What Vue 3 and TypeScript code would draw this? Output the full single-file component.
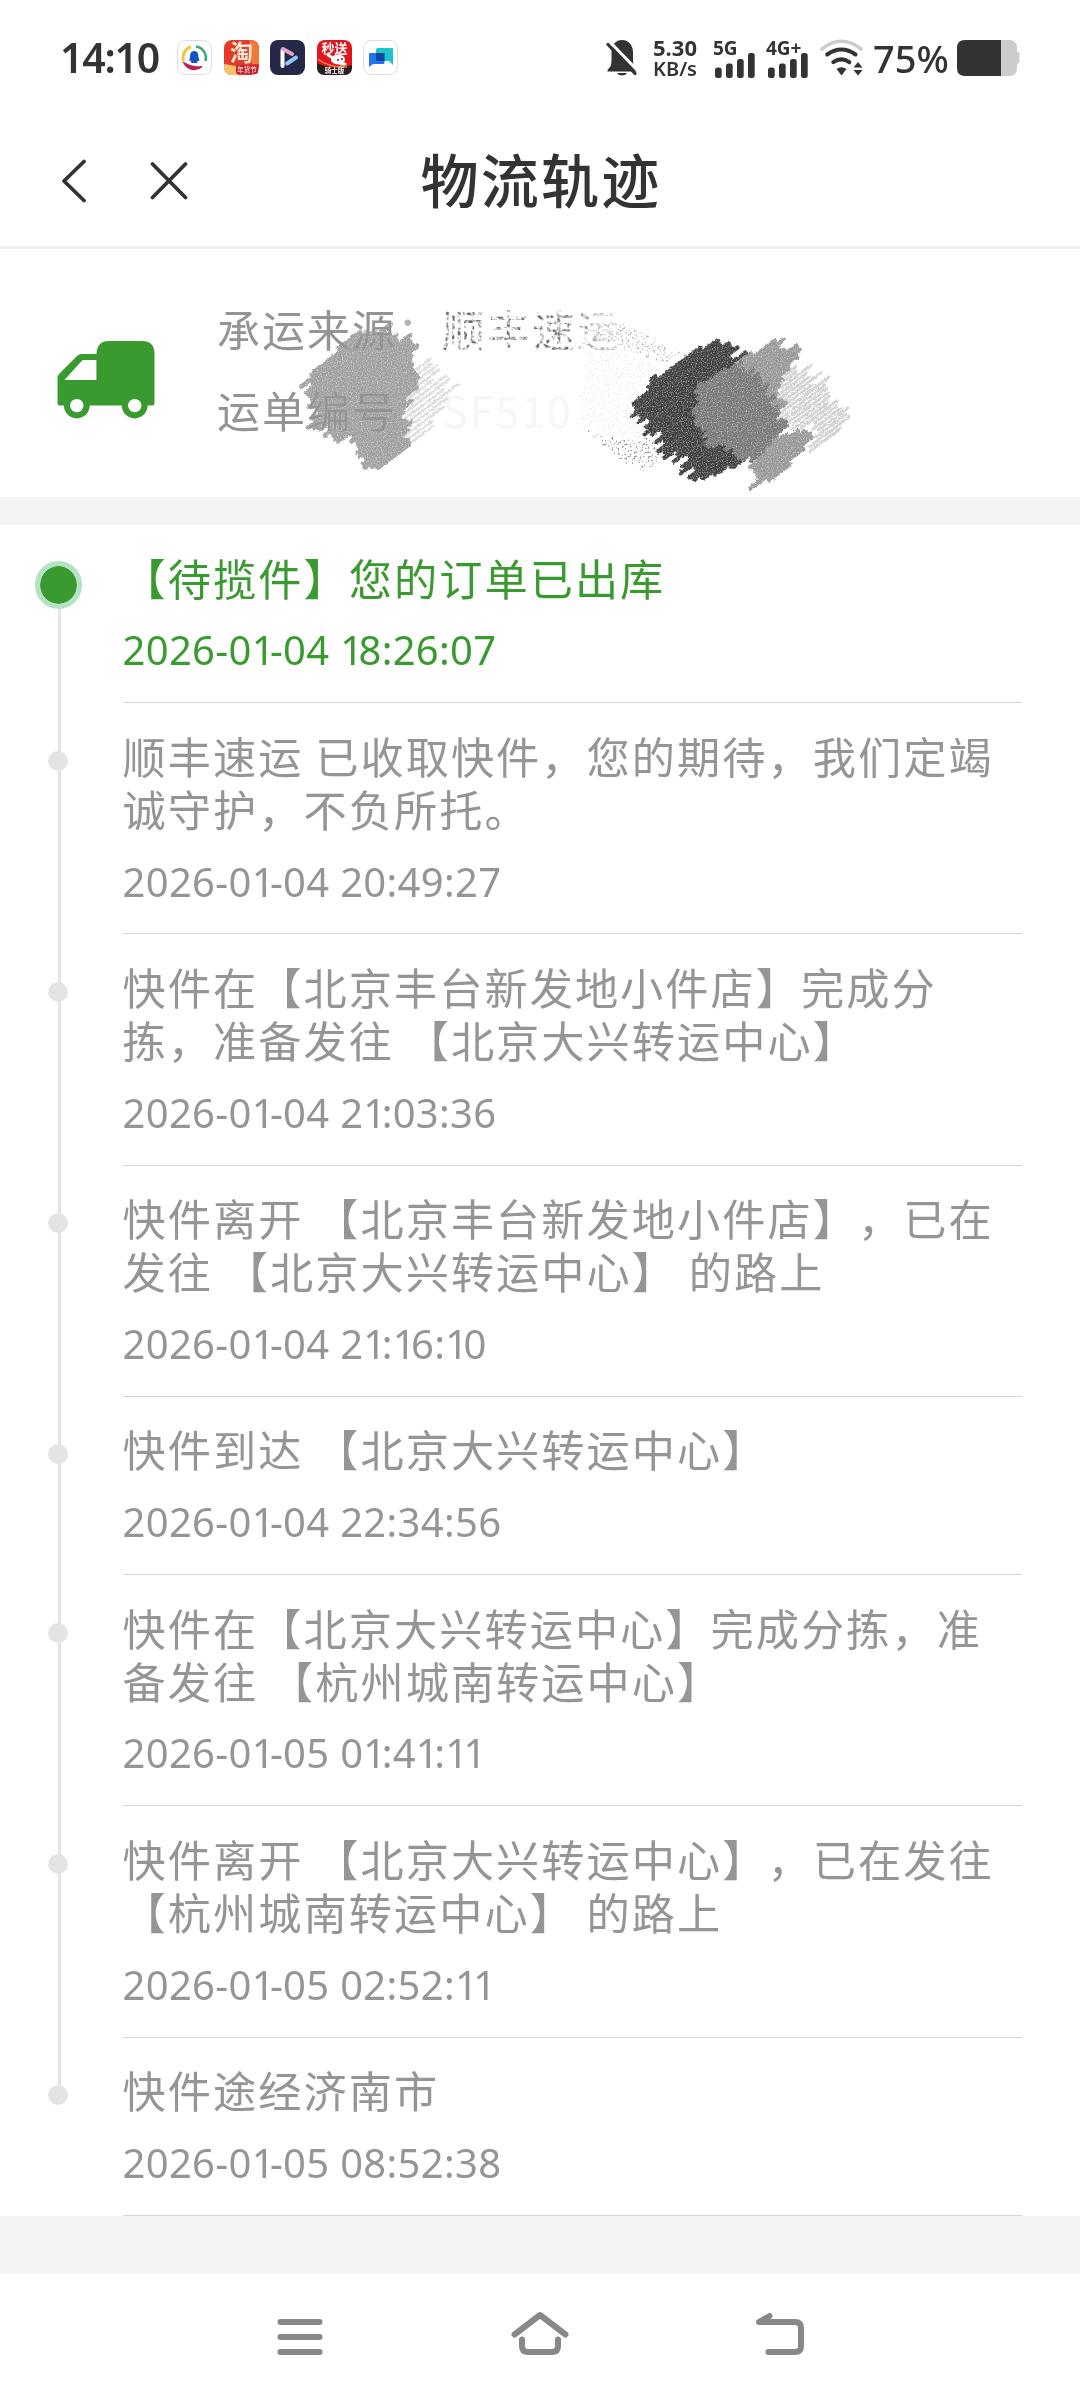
<script setup lang="ts">
interface TrackItem {
  lines: string[]
  time: string
  active?: boolean
}

interface Scribble {
  points: number[][]
  color: string
  gap: number
  width: number
  jitter: number
}

const items: TrackItem[] = [
  { lines: ['【待揽件】您的订单已出库'], time: '2026-01-04 18:26:07', active: true },
  { lines: ['顺丰速运 已收取快件，您的期待，我们定竭', '诚守护，不负所托。'], time: '2026-01-04 20:49:27' },
  { lines: ['快件在【北京丰台新发地小件店】完成分', '拣，准备发往 【北京大兴转运中心】'], time: '2026-01-04 21:03:36' },
  { lines: ['快件离开 【北京丰台新发地小件店】，已在', '发往 【北京大兴转运中心】 的路上'], time: '2026-01-04 21:16:10' },
  { lines: ['快件到达 【北京大兴转运中心】'], time: '2026-01-04 22:34:56' },
  { lines: ['快件在【北京大兴转运中心】完成分拣，准', '备发往 【杭州城南转运中心】'], time: '2026-01-05 01:41:11' },
  { lines: ['快件离开 【北京大兴转运中心】，已在发往', '【杭州城南转运中心】 的路上'], time: '2026-01-05 02:52:11' },
  { lines: ['快件途经济南市'], time: '2026-01-05 08:52:38' },
]

const bars = [
  { x: 0, y: 14.5 },
  { x: 11, y: 10.5 },
  { x: 22, y: 6 },
  { x: 33, y: 0 },
]

// Small deterministic generator so the strokes are the same on every load
let seed = 20260105
function rand(): number {
  seed = (seed * 1103515245 + 12345) % 2147483648
  return seed / 2147483648
}

// Fills a polygon with slanted pencil strokes
function hatch(s: Scribble): string {
  const ang = (-37 * Math.PI) / 180
  const dx = Math.cos(ang)
  const dy = Math.sin(ang)
  const offs = s.points.map(([x, y]) => -x * dy + y * dx)
  const lo = Math.min(...offs)
  const hi = Math.max(...offs)
  let d = ''
  for (let o = lo + 2; o < hi - 1; o += s.gap) {
    const hits: number[] = []
    s.points.forEach(([x1, y1], i) => {
      const [x2, y2] = s.points[(i + 1) % s.points.length]
      const a = -x1 * dy + y1 * dx - o
      const b = -x2 * dy + y2 * dx - o
      if (a * b < 0) {
        const t = a / (a - b)
        hits.push((x1 + (x2 - x1) * t) * dx + (y1 + (y2 - y1) * t) * dy)
      }
    })
    hits.sort((m, n) => m - n)
    for (let i = 0; i + 1 < hits.length; i += 2) {
      const a = hits[i] + 2 + (rand() - 0.35) * s.jitter
      const b = hits[i + 1] - 2 - (rand() - 0.35) * s.jitter
      if (b <= a) continue
      d += `M${(a * dx - o * dy).toFixed(1)} ${(a * dy + o * dx).toFixed(1)}L${(b * dx - o * dy).toFixed(1)} ${(b * dy + o * dx).toFixed(1)}`
    }
  }
  return d
}

const scribbles: Scribble[] = [
  { color: '#a0a0a0', gap: 4.1, width: 4.6, jitter: 16, points: [[302, 382], [353, 335], [391, 326], [416, 340], [422, 366], [411, 403], [409, 447], [382, 469], [362, 464], [349, 453], [345, 443], [311, 427], [307, 403]] },
  { color: '#989898', gap: 4.3, width: 4.4, jitter: 16, points: [[739, 360], [774, 338], [804, 350], [787, 377], [783, 430], [818, 430], [783, 478], [753, 487], [750, 458], [740, 430]] },
  { color: '#404040', gap: 4.4, width: 4.4, jitter: 20, points: [[642, 384], [712, 341], [749, 353], [718, 390], [722, 420], [745, 443], [753, 458], [693, 488], [676, 463], [644, 430], [632, 413]] },
  { color: '#797979', gap: 3.4, width: 4.2, jitter: 12, points: [[697, 384], [739, 363], [764, 374], [782, 413], [786, 427], [753, 462], [705, 445], [695, 413]] },
]
const paleScribbles: Scribble[] = [
  { color: '#dcdcdc', gap: 4.6, width: 2.6, jitter: 18, points: [[414, 363], [433, 357], [458, 390], [433, 427], [406, 452], [381, 433], [402, 407]] },
  { color: '#d0d0d0', gap: 4, width: 3, jitter: 18, points: [[775, 370], [793, 360], [820, 373], [846, 405], [845, 427], [814, 452], [804, 430], [773, 420]] },
]
const dustScribbles: Scribble[] = [
  { color: '#b8b8b8', gap: 4, width: 3, jitter: 8, points: [[586, 330], [612, 322], [650, 333], [682, 356], [668, 366], [630, 350], [598, 342]] },
  { color: '#ececec', gap: 4, width: 3, jitter: 8, points: [[588, 342], [665, 368], [640, 400], [645, 450], [575, 425]] },
  { color: '#9a9a9a', gap: 4, width: 3, jitter: 6, points: [[580, 426], [620, 440], [657, 438], [670, 452], [645, 475], [620, 460]] },
]
const main = scribbles.map((s) => ({ ...s, d: hatch(s) }))
const pale = paleScribbles.map((s) => ({ ...s, d: hatch(s) }))
const dust = dustScribbles.map((s) => ({ ...s, d: hatch(s) }))
</script>

<template>
  <div class="screen">
    <div class="status">
      <span class="clock">14:10</span>
      <div class="apps">
        <svg class="app" viewBox="0 0 35 35">
          <rect x=".5" y=".5" width="34" height="34" rx="8" fill="#fff" stroke="#ddd" />
          <path d="M6.5 21A11.5 11.5 0 0 1 14 6.8" fill="none" stroke="#e8c840" stroke-width="3" />
          <path d="M19 6.5A11.5 11.5 0 0 1 28.5 21" fill="none" stroke="#3aa878" stroke-width="2.6" />
          <path d="M7 23A11.5 11.5 0 0 0 25 26.500Q17 28.500 7 23Z" fill="#c0204c" stroke="#c0204c" stroke-width="1.500" />
          <path d="M17.200 11C20.500 11 21.500 14 21.300 16.500L22.500 21 21 20.500 20 23H14.500L13.500 20.500 12 21 13.200 16.500C13 14 14 11 17.200 11Z" fill="#1555c8" />
        </svg>
        <svg class="app" viewBox="0 0 35 35">
          <rect width="35" height="35" rx="8" fill="#e23b2c" />
          <path d="M25 0Q35 0 35 9V24H28Z" fill="#f07838" />
          <text x="17.500" y="21" text-anchor="middle" font-size="23" font-weight="700" fill="#ffe9cf">淘</text>
          <path d="M0 24L12 26 14 35H8Q0 35 0 27Z" fill="#f5c070" />
          <rect x="12" y="25" width="22" height="9" rx="2" fill="#c8202c" />
          <text x="23" y="32" text-anchor="middle" font-size="6.500" fill="#fff">年货节</text>
        </svg>
        <svg class="app" viewBox="0 0 35 35">
          <rect width="35" height="35" rx="8" fill="#262848" />
          <path d="M12.500 10V26" stroke="#fff" stroke-width="4" stroke-linecap="round" />
          <path d="M13 9L22 14" stroke="#e79fd0" stroke-width="4" stroke-linecap="round" />
          <path d="M17 23.500L26 17.500" stroke="#8fc8f4" stroke-width="4" stroke-linecap="round" />
        </svg>
        <svg class="app" viewBox="0 0 35 35">
          <rect width="35" height="35" rx="8" fill="#e3151c" />
          <path d="M0 23Q17 31 35 25V27Q35 35 27 35H8Q0 35 0 27Z" fill="#28201e" />
          <path d="M1 19Q12 28 30 27" stroke="#e88848" stroke-width="1.500" fill="none" />
          <ellipse cx="21" cy="19.500" rx="7" ry="5" fill="#fff" />
          <path d="M11 15L16 18M24 24L28 24" stroke="#fff" stroke-width="3" stroke-linecap="round" />
          <circle cx="21" cy="20" r="1" fill="#333" /><circle cx="25" cy="19" r="1" fill="#333" />
          <text x="17.500" y="13" text-anchor="middle" font-size="13" font-weight="700" fill="#fff">秒送</text>
          <text x="17.500" y="33" text-anchor="middle" font-size="6.500" font-weight="700" fill="#fff">骑士版</text>
        </svg>
        <svg class="app" viewBox="0 0 35 35">
          <rect x=".5" y=".5" width="34" height="34" rx="8" fill="#fff" stroke="#ddd" />
          <path d="M15 8H29Q30 8 30 9V25L26 21H14Q13 21 13 20V10Q13 8 15 8Z" fill="#1cc4cc" />
          <path d="M7 13H21.500V23Q21.500 24 20 24H10L6 27V14Q6 13 7 13Z" fill="#2472f0" />
          <path d="M13 13H21.500V21H14Q13 21 13 20Z" fill="#0c4a9c" />
        </svg>
      </div>
      <div class="sys">
        <svg class="bell" viewBox="0 0 32 36">
          <path d="M16 0C24 0 27 7 27 12V21Q27 25 29 27L31 30V31.500H1.500V30L4 27Q5.500 25 5.500 21V12C5.500 6 9 0 16 0Z" fill="#333" />
          <path d="M11 33H21Q19.500 35.500 16 35.500T11 33Z" fill="#333" />
          <path d="M4 2L32 31" stroke="#fff" stroke-width="3" />
          <path d="M2 4.500L29 33.500" stroke="#333" stroke-width="3.200" stroke-linecap="round" />
        </svg>
        <div class="speed"><span>5.30</span><span class="unit">KB/s</span></div>
        <div class="signal">
          <span>5G</span>
          <svg viewBox="0 0 40 25"><rect v-for="b in bars" :key="b.x" :x="b.x" :y="b.y" width="6.700" :height="25 - b.y" rx="2.500" fill="#333" /></svg>
        </div>
        <div class="signal second">
          <span>4G+</span>
          <svg viewBox="0 0 40 25"><rect v-for="b in bars" :key="b.x" :x="b.x" :y="b.y" width="6.700" :height="25 - b.y" rx="2.500" fill="#333" /></svg>
        </div>
        <svg class="wifi" viewBox="0 0 43 37">
          <g fill="none" stroke-linecap="round">
            <path d="M2 10Q21.300-5.500 41 10" stroke="#ccc" stroke-width="3.600" />
            <path d="M7.200 15.500Q21.500 5.500 35.500 15.500" stroke="#333" stroke-width="4" />
            <path d="M13.300 23.200Q21.500 17.500 29.300 23.200" stroke="#333" stroke-width="4" />
          </g>
          <path d="M16.500 30Q21.500 26.700 26.500 30L21.500 36.500ZM38 23L42.500 28.500H33.500ZM38 36.500L42.500 31H33.500Z" fill="#333" />
        </svg>
        <span class="percent">75%</span>
        <svg class="battery" viewBox="0 0 63 36">
          <path d="M43 0H52Q60 0 60 8V12Q62.500 12 62.500 14V22Q62.500 24 60 24V28Q60 36 52 36H43Z" fill="#ccc" />
          <path d="M44 0H8Q0 0 0 8V28Q0 36 8 36H44Z" fill="#333" />
        </svg>
      </div>
    </div>

    <header class="header">
      <svg class="actions" viewBox="0 0 130 44" fill="none" stroke="#333" stroke-width="3.800" stroke-linecap="round" stroke-linejoin="round">
        <path d="M24 2.500L4 22 24 41.500M92.500 5L125.500 38.500M125.500 5L92.500 38.500" />
      </svg>
      <h1>物流轨迹</h1>
    </header>

    <section class="carrier">
      <svg class="truck" viewBox="57 340 98 79">
        <path fill="#399b2f" fill-rule="evenodd" d="M57.500 403V378Q57.500 375.500 59.500 373.500L77 356Q79 354 82 354H96.400Q97 341 109 341H142Q154.500 341 154.500 354V403Q154.500 405.500 152 405.500H147.600A12.900 12.900 0 0 1 121.800 405.500H89.700A12.900 12.900 0 0 1 63.900 405.500H60Q57.500 405.500 57.500 403ZM64.400 380H96.400V360H84Q82.600 360 81.500 361.200Z" />
        <circle cx="76.800" cy="405.600" r="6.700" fill="#fff" />
        <circle cx="134.700" cy="405.600" r="6.700" fill="#fff" />
      </svg>
      <div class="carrier-info">
        <p>承运来源<span class="colon">：</span><span class="worn">顺丰速运</span></p>
        <p>运单编号<span class="faint">：SF510</span></p>
      </div>
      <svg class="scribble" viewBox="290 300 570 197" fill="none" stroke-linecap="round">
        <defs>
          <filter id="pencil" x="-5%" y="-5%" width="110%" height="110%" color-interpolation-filters="sRGB">
            <feTurbulence type="fractalNoise" baseFrequency="0.35" numOctaves="2" seed="4" result="n" />
            <feDisplacementMap in="SourceGraphic" in2="n" scale="4" xChannelSelector="R" yChannelSelector="G" result="s" />
            <feTurbulence type="fractalNoise" baseFrequency="0.8" numOctaves="1" seed="9" />
            <feColorMatrix values="0 0 0 0 1  0 0 0 0 1  0 0 0 0 1  1.6 0 0 0 -0.75" result="g" />
            <feComposite in="g" in2="s" operator="in" result="gi" />
            <feMerge><feMergeNode in="s" /><feMergeNode in="gi" /></feMerge>
          </filter>
          <filter id="dust" x="-5%" y="-5%" width="110%" height="110%">
            <feTurbulence type="fractalNoise" baseFrequency="0.5" numOctaves="2" seed="12" result="n" />
            <feColorMatrix in="n" values="0 0 0 0 0  0 0 0 0 0  0 0 0 0 0  7 0 0 0 -3.7" result="m" />
            <feComposite in="SourceGraphic" in2="m" operator="in" />
          </filter>
          <filter id="worn" x="-5%" y="-5%" width="110%" height="110%">
            <feTurbulence type="fractalNoise" baseFrequency="0.25" numOctaves="2" seed="7" result="n" />
            <feColorMatrix in="n" values="0 0 0 0 0  0 0 0 0 0  0 0 0 0 0  3.5 0 0 0 -1.4" result="m" />
            <feComposite in="SourceGraphic" in2="m" operator="in" />
          </filter>
        </defs>
        <g filter="url(#dust)"><path v-for="(s, i) in dust" :key="i" :d="s.d" :stroke="s.color" :stroke-width="s.width" /></g>
        <g filter="url(#pencil)"><path v-for="(s, i) in pale" :key="i" :d="s.d" :stroke="s.color" :stroke-width="s.width" /></g>
        <g filter="url(#pencil)"><path v-for="(s, i) in main" :key="i" :d="s.d" :stroke="s.color" :stroke-width="s.width" /></g>
      </svg>
    </section>

    <ul class="track">
      <li v-for="(item, i) in items" :key="i" :class="{ active: item.active }">
        <div class="rail"><i class="dot"></i></div>
        <div class="entry">
          <p v-for="line in item.lines" :key="line" class="desc">{{ line }}</p>
          <p class="time"><span v-for="(c, k) in item.time" :key="k" :class="{ one: c === '1' }">{{ c }}</span></p>
        </div>
      </li>
    </ul>

    <nav class="navbar">
      <svg viewBox="0 0 600 126" fill="none" stroke="#888" stroke-width="6" stroke-linecap="round" stroke-linejoin="round">
        <path d="M40.500 48H79.500M40.500 63H79.500M40.500 78H79.500" />
        <path d="M274.500 60.500L300 41 325.500 60.500M282 65.500V72Q282 78 288 78H312Q318 78 318 72V65.500" />
        <path d="M528.500 78H555Q561 78 561 72V54Q561 48 555 48H519L529.500 42" />
      </svg>
    </nav>
  </div>
</template>

<style>
body {
  margin: 0;
  background: #f3f3f3;
}
</style>

<style scoped>
.screen {
  width: 1080px;
  height: 2400px;
  display: flex;
  flex-direction: column;
  background: #f3f3f3;
  font-family: "Noto Sans CJK SC", sans-serif;
  text-spacing-trim: space-all;
  overflow: hidden;
}
p, h1, ul {
  margin: 0;
  padding: 0;
}
.status {
  height: 115px;
  box-sizing: border-box;
  padding: 0 60px 0 60px;
  display: flex;
  align-items: center;
  background: #fff;
  color: #333;
  font-family: "Noto Sans", sans-serif;
}
.clock {
  width: 117px;
  font-size: 41px;
  font-weight: 600;
  letter-spacing: -1.200px;
  line-height: 50px;
  margin-top: -2px;
}
.apps {
  display: flex;
  gap: 11.500px;
}
.app {
  width: 35px;
  height: 35px;
  overflow: visible;
  font-family: "Noto Sans CJK SC", sans-serif;
}
.sys {
  margin-left: auto;
  display: flex;
  align-items: center;
}
.bell {
  width: 32px;
  height: 36px;
}
.speed {
  width: 46px;
  margin-left: 14px;
  display: flex;
  flex-direction: column;
  align-items: center;
  font-size: 22px;
  font-weight: 700;
  line-height: 22px;
}
.unit {
  font-size: 20px;
  font-weight: 600;
}
.signal {
  width: 40px;
  height: 40px;
  margin-left: 17px;
  display: grid;
}
.signal span {
  grid-area: 1 / 1;
  font-size: 19px;
  line-height: 20px;
  font-weight: 700;
  margin-left: -2px;
}
.signal svg {
  grid-area: 1 / 1;
  align-self: end;
  width: 40px;
  height: 25px;
}
.signal.second {
  margin-left: 13px;
}
.wifi {
  width: 43px;
  height: 37px;
  margin-left: 12px;
}
.percent {
  width: 84px;
  margin-left: 10px;
  font-size: 38px;
  font-weight: 500;
  line-height: 50px;
}
.battery {
  width: 63px;
  height: 36px;
}
.header {
  height: 134px;
  box-sizing: border-box;
  border-bottom: 3px solid #f0f0f0;
  background: #fff;
  display: grid;
  grid-template-columns: 1fr auto 1fr;
  align-items: center;
  color: #333;
}
.actions {
  width: 130px;
  height: 44px;
  margin-left: 60px;
}
.header h1 {
  font-size: 58px;
  font-weight: 500;
  letter-spacing: 2.300px;
  line-height: 80px;
  margin: -5px 0 0 2px;
}
.carrier {
  position: relative;
  height: 248px;
  display: flex;
  background: #fff;
}
.truck {
  width: 98px;
  height: 79px;
  margin: 91px 0 0 57px;
}
.carrier-info {
  margin: 38.500px 0 0 62px;
  color: #949494;
  font-size: 43px;
  letter-spacing: 2px;
  line-height: 81px;
}
.worn {
  color: #6a6a6a;
  filter: url(#worn);
  mask-image: linear-gradient(90deg, #000 70%, rgba(0, 0, 0, 0.25) 96%);
}
.colon {
  color: #b4b4b4;
}
.faint {
  color: #f6f6f6;
}
.scribble {
  position: absolute;
  left: 290px;
  top: 51px;
  width: 570px;
  height: 197px;
  mix-blend-mode: darken;
}
.track {
  margin-top: 28px;
  list-style: none;
  background: #fff;
}
.track li {
  display: flex;
}
.rail {
  width: 122.500px;
  display: flex;
  justify-content: center;
  background: linear-gradient(#e4e4e4, #e4e4e4) 58px 0 / 3px 100% no-repeat;
}
.track li:first-child .rail {
  background-position: 58px 60px;
}
.track li:last-child .rail {
  background-size: 3px 57px;
}
.dot {
  width: 20px;
  height: 20px;
  margin: 47.500px 6px 0 0;
  border-radius: 50%;
  background: #e4e4e4;
}
.active .dot {
  width: 37.500px;
  height: 37.500px;
  margin-top: 36px;
  border: 5px solid #b3e2c4;
  background: #399b2f;
  background-clip: padding-box;
}
.entry {
  width: 899px;
  box-sizing: border-box;
  padding: 25.500px 0 24.900px;
  border-bottom: 1px solid #d4d4d4;
  color: #959595;
}
.active .entry {
  color: #399b2f;
}
.desc {
  font-size: 43.200px;
  letter-spacing: 2.050px;
  line-height: 53.200px;
  white-space: pre;
}
.time {
  margin-top: 19.500px;
  font-family: "Noto Sans", sans-serif;
  font-size: 40px;
  letter-spacing: 0.300px;
  line-height: 54px;
  white-space: pre;
}
.one {
  letter-spacing: -4.600px;
}
.navbar {
  height: 126px;
  margin-top: auto;
  display: flex;
  justify-content: center;
  background: #fff;
}
.navbar svg {
  width: 600px;
  height: 126px;
}
</style>
